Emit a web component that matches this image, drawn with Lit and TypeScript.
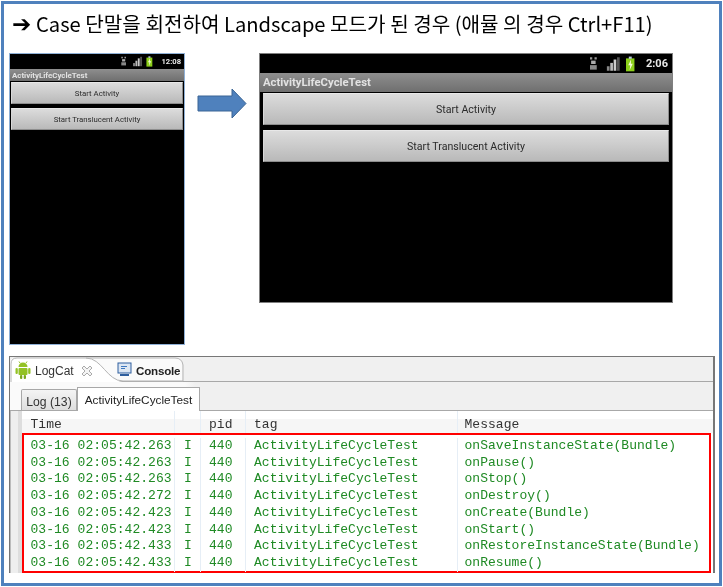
import { LitElement, html, css, svg } from "lit";
import { customElement } from "lit/decorators.js";

const rows = [
  ["03-16 02:05:42.263", "onSaveInstanceState(Bundle)"],
  ["03-16 02:05:42.263", "onPause()"],
  ["03-16 02:05:42.263", "onStop()"],
  ["03-16 02:05:42.272", "onDestroy()"],
  ["03-16 02:05:42.423", "onCreate(Bundle)"],
  ["03-16 02:05:42.423", "onStart()"],
  ["03-16 02:05:42.433", "onRestoreInstanceState(Bundle)"],
  ["03-16 02:05:42.433", "onResume()"],
];

const statusIcons = svg`
  <svg class="st" viewBox="0 0 40 14" aria-hidden="true">
    <rect x="0" y="1" width="2" height="2" fill="#999"/><rect x="4" y="1" width="2" height="2" fill="#999"/>
    <rect x="1" y="4" width="4" height="3" fill="#aaa"/><rect x="0" y="8" width="6" height="4" fill="#888"/>
    <rect x="15" y="9" width="2.4" height="4" fill="#888"/><rect x="18" y="6" width="2.4" height="7" fill="#bbb"/>
    <rect x="21" y="3" width="2.4" height="10" fill="#ccc"/><rect x="24" y="1" width="2.4" height="12" fill="#555"/>
    <rect x="32" y="2" width="7.5" height="11.5" fill="#8ccf1a"/><rect x="34.5" y="0.4" width="2.6" height="2" fill="#bcd"/>
    <path d="M36.5 3 L34 8 H35.8 L35.2 12.6 L38 6.8 H36.3 Z" fill="#f6fbd8"/>
  </svg>`;

@customElement("app-root")
export class AppRoot extends LitElement {
  static styles = css`
    :host { display: block; width: 723px; height: 587px; background: #fff; overflow: hidden; }
    .frame {
      box-sizing: border-box; width: 721px; height: 585px; margin: 1px 0 0 1px;
      border: 3px solid #4f81bd; padding: 5px 5px 0 5px;
      display: flex; flex-direction: column; background: #fff; filter: blur(0.3px);
    }
    h1 {
      margin: 0; height: 44px; padding: 1px 0 0 3px; box-sizing: border-box; display: flex; align-items: flex-start; gap: 6px;
      font: 400 20.15px/28px "Noto Sans CJK KR", "Noto Sans", sans-serif; color: #000; white-space: nowrap;
    }
    .mark { font: 700 23px/28px "DejaVu Sans", sans-serif; width: 18px; flex: none; overflow: visible; }
    .shots { display: flex; align-items: flex-start; height: 303px; }
    .phone { box-sizing: border-box; background: #000; display: flex; flex-direction: column; font-family: "Roboto", "Noto Sans", sans-serif; flex: none; }
    .port { width: 176px; height: 292px; border: 1px solid #8fb0d6; }
    .land { width: 414px; height: 250px; border: 1px solid #7f7f7f; }
    .status { display: flex; align-items: center; justify-content: flex-end; color: #e8e8e8; font-weight: 700; flex: none; }
    .port .status { height: 15px; font-size: 7.6px; gap: 8px; padding-right: 3px; }
    .land .status { height: 19px; font-size: 11px; gap: 11px; padding-right: 4px; }
    .st { display: block; }
    .port .st { width: 32px; height: 11px; }
    .land .st { width: 45px; height: 16px; }
    .bar { background: linear-gradient(#8e8e8e, #6f6f6f); color: #e2e2e2; font-weight: 700; display: flex; align-items: center; flex: none; }
    .port .bar { height: 12px; font-size: 7.9px; padding-left: 2px; }
    .land .bar { height: 19px; font-size: 11.3px; padding-left: 3px; }
    .btn {
      box-sizing: border-box; display: flex; align-items: center; justify-content: center; color: #2b2b2b; flex: none;
      background: linear-gradient(#dcdcdc, #b9b9b9); border: 1px solid #8d8d8d; border-top-color: #e8e8e8; border-left-color: #d8d8d8;
    }
    .port .btn { height: 22.5px; margin: 0.5px 1px 3px 1px; font-size: 7.8px; padding-top: 1px; }
    .land .btn { height: 32px; margin: 1px 3px 4px 3px; font-size: 10.6px; padding-top: 1px; }
    .arrow { width: 50px; height: 31px; margin: 35px 12px 0 12px; flex: none; display: block; }
    .panel {
      box-sizing: border-box; width: 706px; height: 217px; border: 1px solid #777; border-right: 2px solid #777; border-bottom: 1px solid #666;
      background: #fff; display: flex; flex-direction: column; font-family: "Liberation Sans", sans-serif;
    }
    .tabs1 { height: 24px; flex: none; box-sizing: content-box; background: #f0f0f0; border-bottom: 1px solid #a8a8a8; display: flex; align-items: center; position: relative; font-size: 12px; color: #333; }
    .tabshape { position: absolute; left: 0; top: 0; width: 180px; height: 25px; }
    .logcat { position: relative; display: flex; align-items: center; width: 107px; padding: 3px 0 0 5px; box-sizing: border-box; flex: none; }
    .droid { width: 16px; height: 18px; margin: -1px 4px 0 0; flex: none; }
    .xicon { width: 12px; height: 12px; margin-left: 7px; flex: none; }
    .console { position: relative; display: flex; align-items: center; gap: 4px; font-size: 11.6px; font-weight: 700; color: #222; letter-spacing: -0.2px; padding-top: 3px; }
    .mon { width: 15px; height: 15px; flex: none; margin-top: -2px; }
    .tabs2 { height: 29px; flex: none; box-sizing: border-box; background: linear-gradient(90deg, #fafafa 0 175px, #f0f0f0 185px); border-bottom: 1px solid #a8a8a8; display: flex; align-items: flex-end; padding-left: 11px; color: #333; }
    .t-log { box-sizing: border-box; height: 21px; width: 56px; background: linear-gradient(#f4f4f4, #dedede); border: 1px solid #a8a8a8; border-bottom: none; display: flex; align-items: center; justify-content: center; border-radius: 2px 2px 0 0; font-size: 12.2px; padding-top: 3px; }
    .t-act { box-sizing: border-box; height: 24px; width: 123px; background: #fff; border: 1px solid #a8a8a8; border-bottom: none; display: flex; align-items: center; justify-content: center; color: #222; margin-bottom: -1px; position: relative; font-size: 11.8px; }
    .table { flex: 1; font: 13px/16.72px "Liberation Mono", monospace; letter-spacing: 0.04px; color: #1f8a24; display: flex; flex-direction: column; padding-left: 9px; background: linear-gradient(90deg, #bbb 0 1px, #eee 1px 8px, #ddd 8px 12px, #fff 12px); }
    .row { display: grid; grid-template-columns: 156px 26px 45px 212px 1fr; height: 16.72px; white-space: nowrap; }
    .row > span { box-sizing: border-box; padding-left: 11.5px; border-right: 1px solid #e6eef6; overflow: hidden; }
    .row > .c { padding-left: 9px; }
    .row > .p, .row > .g { padding-left: 8px; }
    .row > .m { padding-left: 6.5px; border-right: none; }
    .head { height: 22px; flex: none; line-height: 27px; color: #333; background: linear-gradient(#fff 0 8px, #f6f6f6 8px); margin-left: 3px; grid-template-columns: 153px 26px 45px 212px 1fr; }
    .head > .t { padding-left: 8.5px; }
    .rows { box-sizing: border-box; flex: none; border: 2px solid #f00; margin: 0 2px 0 3px; padding-top: 3px; height: 140px; }
    .rows .row { margin-left: -5px; }
  `;

  render() {
    return html`<div class="frame">
      <h1><span class="mark">➔</span><span>Case 단말을 회전하여 Landscape 모드가 된 경우 (애뮬 의 경우 Ctrl+F11)</span></h1>
      <div class="shots">
        <div class="phone port">
          <div class="status">${statusIcons}<span>12:08</span></div>
          <div class="bar">ActivityLifeCycleTest</div>
          <div class="btn">Start Activity</div>
          <div class="btn">Start Translucent Activity</div>
        </div>
        <svg class="arrow" viewBox="0 0 50 31" aria-hidden="true">
          <path d="M1 8 H35 V1 L49 15.5 L35 30 V23 H1 Z" fill="#4f81bd" stroke="#3a6595" stroke-width="1"/>
        </svg>
        <div class="phone land">
          <div class="status">${statusIcons}<span>2:06</span></div>
          <div class="bar">ActivityLifeCycleTest</div>
          <div class="btn">Start Activity</div>
          <div class="btn">Start Translucent Activity</div>
        </div>
      </div>
      <div class="panel">
        <div class="tabs1">
          <svg class="tabshape" viewBox="0 0 180 25" aria-hidden="true">
            <path d="M0 25 V6 Q0 1 5 1 H167 Q172 1 172 6 V24 H113 C97 24 92 1 76 1 H5" fill="#fafafa" stroke="none"/>
            <path d="M0 25 V7 Q1 1 7 1 H76 C92 1 97 24 113 25 Z" fill="#fff" stroke="none"/>
            <path d="M1 25 V7 Q1 1 7 1 H165 Q172 1 173 8 V24 M76 1 C92 1 97 24 113 24 H173" fill="none" stroke="#b5b5b5"/>
          </svg>
          <div class="logcat">
            <svg class="droid" viewBox="0 0 16 18" aria-hidden="true">
              <path d="M3.5 6 a4.5 4.5 0 0 1 9 0 Z" fill="#93c225"/>
              <path d="M5 2 L4 0.5 M11 2 L12 0.5" stroke="#93c225"/>
              <rect x="3.5" y="7" width="9" height="7" rx="1" fill="#93c225"/>
              <rect x="0.5" y="7" width="2.3" height="6" rx="1.1" fill="#93c225"/>
              <rect x="13.2" y="7" width="2.3" height="6" rx="1.1" fill="#93c225"/>
              <rect x="5" y="14" width="2.3" height="4" rx="1" fill="#7ca81e"/>
              <rect x="8.7" y="14" width="2.3" height="4" rx="1" fill="#7ca81e"/>
            </svg>
            <span>LogCat</span>
            <svg class="xicon" viewBox="0 0 12 12" aria-hidden="true">
              <path d="M1 3 L3 1 L6 4 L9 1 L11 3 L8 6 L11 9 L9 11 L6 8 L3 11 L1 9 L4 6 Z" fill="#f4f4f4" stroke="#aaa"/>
            </svg>
          </div>
          <div class="console">
            <svg class="mon" viewBox="0 0 15 15" aria-hidden="true">
              <rect x="1" y="1" width="13" height="10" fill="#dbe6f4" stroke="#2f5f9e"/>
              <rect x="3" y="3" width="9" height="6" fill="#dfe8f2"/>
              <path d="M4 4.5 H10 M4 6.5 H8" stroke="#3f78c0"/>
              <rect x="3" y="12" width="9" height="2" fill="#2f5f9e"/>
            </svg>
            <span>Console</span>
          </div>
        </div>
        <div class="tabs2">
          <div class="t-log">Log (13)</div>
          <div class="t-act">ActivityLifeCycleTest</div>
        </div>
        <div class="table">
          <div class="row head"><span class="t">Time</span><span></span><span class="p">pid</span><span class="g">tag</span><span class="m">Message</span></div>
          <div class="rows">
            ${rows.map(
              ([t, m]) => html`<div class="row"><span>${t}</span><span class="c">I</span><span class="p">440</span><span class="g">ActivityLifeCycleTest</span><span class="m">${m}</span></div>`
            )}
          </div>
        </div>
      </div>
    </div>`;
  }
}
